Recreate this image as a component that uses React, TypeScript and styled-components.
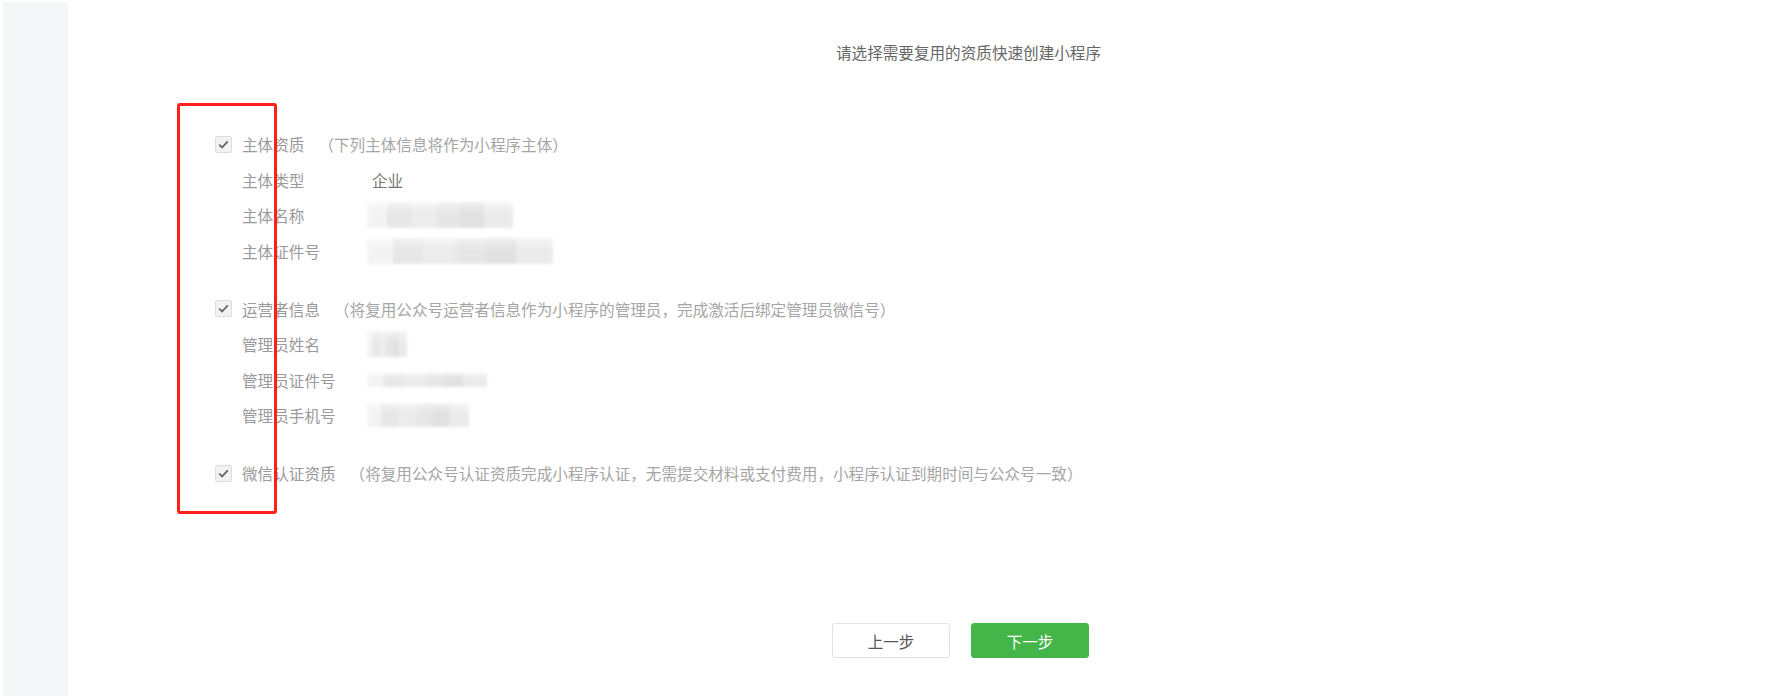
import React from "react";
import styled, { createGlobalStyle } from "styled-components";

const Global = createGlobalStyle`
  html, body { margin: 0; padding: 0; background: #ffffff; }
  body { font-family: "Noto Sans CJK SC", "Noto Sans", sans-serif; }
  * { box-sizing: border-box; }
`;

const Page = styled.div`
  display: flex;
  width: 1783px;
  height: 696px;
  padding: 2px 0 0 3px;
  background: #ffffff;
  overflow: hidden;
`;

const Sidebar = styled.aside`
  width: 65px;
  flex: none;
  background: #f5f6f8;
`;

const Main = styled.main`
  flex: 1;
  display: flex;
  flex-direction: column;
  padding-top: 38px;
`;

const Title = styled.div`
  padding-left: 86px;
  text-align: center;
  font-size: 15.6px;
  line-height: 24px;
  color: #666666;
`;

const Form = styled.div`
  position: relative;
  margin: 62px 0 0 147px;
  display: flex;
  flex-direction: column;
  gap: 22px;
`;

const Section = styled.section`
  display: flex;
  flex-direction: column;
`;

const Header = styled.div`
  display: flex;
  align-items: center;
  height: 36px;
  font-size: 15.6px;
  color: #999999;
`;

const Check = styled.span`
  width: 17px;
  height: 17px;
  flex: none;
  display: flex;
  align-items: center;
  justify-content: center;
  border: 1px solid #dedede;
  border-radius: 2px;
  background: #f2f2f2;
  margin-right: 10px;
`;

const HeaderLabel = styled.span`
  color: #9a9a9a;
`;

const Note = styled.span`
  margin-left: 14px;
  color: #a5a5a5;
`;

const Row = styled.div`
  display: flex;
  align-items: center;
  height: 35.5px;
  padding-left: 27px;
  font-size: 15.6px;
`;

const Label = styled.span`
  width: 130px;
  flex: none;
  color: #9a9a9a;
`;

const Value = styled.span`
  color: #777777;
`;

const Blur = styled.span<{ $w: number; $h: number }>`
  display: inline-block;
  width: ${(p) => p.$w}px;
  height: ${(p) => p.$h}px;
  margin-left: -5px;
  background:
    linear-gradient(180deg, rgba(255,255,255,0.5) 0%, rgba(255,255,255,0) 45%),
    linear-gradient(90deg, #f1f1f1 0%, #f1f1f1 14%, #e3e3e3 14%, #e3e3e3 30%, #e9e9e9 30%, #e9e9e9 48%, #e2e2e2 48%, #e2e2e2 64%, #dcdcdc 64%, #dcdcdc 80%, #e8e8e8 80%, #e8e8e8 100%);
  filter: blur(1.5px);
  opacity: 0.85;
`;

const Highlight = styled.div`
  position: absolute;
  left: -38px;
  top: -23px;
  width: 100px;
  height: 411px;
  border: 3px solid #ff2018;
  border-radius: 3px;
  pointer-events: none;
`;

const Actions = styled.div`
  margin-top: 132px;
  padding-left: 70px;
  display: flex;
  justify-content: center;
  gap: 21px;
`;

const Button = styled.button<{ $primary?: boolean }>`
  width: 118px;
  height: 35px;
  border-radius: 3px;
  font-family: "Noto Sans CJK SC", "Noto Sans", sans-serif;
  font-size: 15.5px;
  cursor: pointer;
  border: 1px solid ${(p) => (p.$primary ? "#44b549" : "#e3e3e3")};
  background: ${(p) => (p.$primary ? "#44b549" : "#ffffff")};
  color: ${(p) => (p.$primary ? "#ffffff" : "#555555")};
`;

const CheckMark = () => (
  <svg width="11" height="9" viewBox="0 0 11 9">
    <path d="M1.2 4.6 L4.1 7.4 L9.8 1.4" fill="none" stroke="#666" strokeWidth="1.8" />
  </svg>
);

type Item = { label: string; value?: string; blur?: [number, number] };

const sections: { title: string; note: string; rows: Item[] }[] = [
  {
    title: "主体资质",
    note: "（下列主体信息将作为小程序主体）",
    rows: [
      { label: "主体类型", value: "企业" },
      { label: "主体名称", blur: [146, 26] },
      { label: "主体证件号", blur: [186, 26] },
    ],
  },
  {
    title: "运营者信息",
    note: "（将复用公众号运营者信息作为小程序的管理员，完成激活后绑定管理员微信号）",
    rows: [
      { label: "管理员姓名", blur: [40, 26] },
      { label: "管理员证件号", blur: [120, 14] },
      { label: "管理员手机号", blur: [102, 24] },
    ],
  },
  {
    title: "微信认证资质",
    note: "（将复用公众号认证资质完成小程序认证，无需提交材料或支付费用，小程序认证到期时间与公众号一致）",
    rows: [],
  },
];

export default function App() {
  return (
    <>
      <Global />
      <Page>
        <Sidebar />
        <Main>
          <Title>请选择需要复用的资质快速创建小程序</Title>
          <Form>
            {sections.map((s) => (
              <Section key={s.title}>
                <Header>
                  <Check>
                    <CheckMark />
                  </Check>
                  <HeaderLabel>{s.title}</HeaderLabel>
                  <Note>{s.note}</Note>
                </Header>
                {s.rows.map((r) => (
                  <Row key={r.label}>
                    <Label>{r.label}</Label>
                    {r.value ? (
                      <Value>{r.value}</Value>
                    ) : r.blur ? (
                      <Blur $w={r.blur[0]} $h={r.blur[1]} />
                    ) : null}
                  </Row>
                ))}
              </Section>
            ))}
            <Highlight />
          </Form>
          <Actions>
            <Button>上一步</Button>
            <Button $primary>下一步</Button>
          </Actions>
        </Main>
      </Page>
    </>
  );
}
